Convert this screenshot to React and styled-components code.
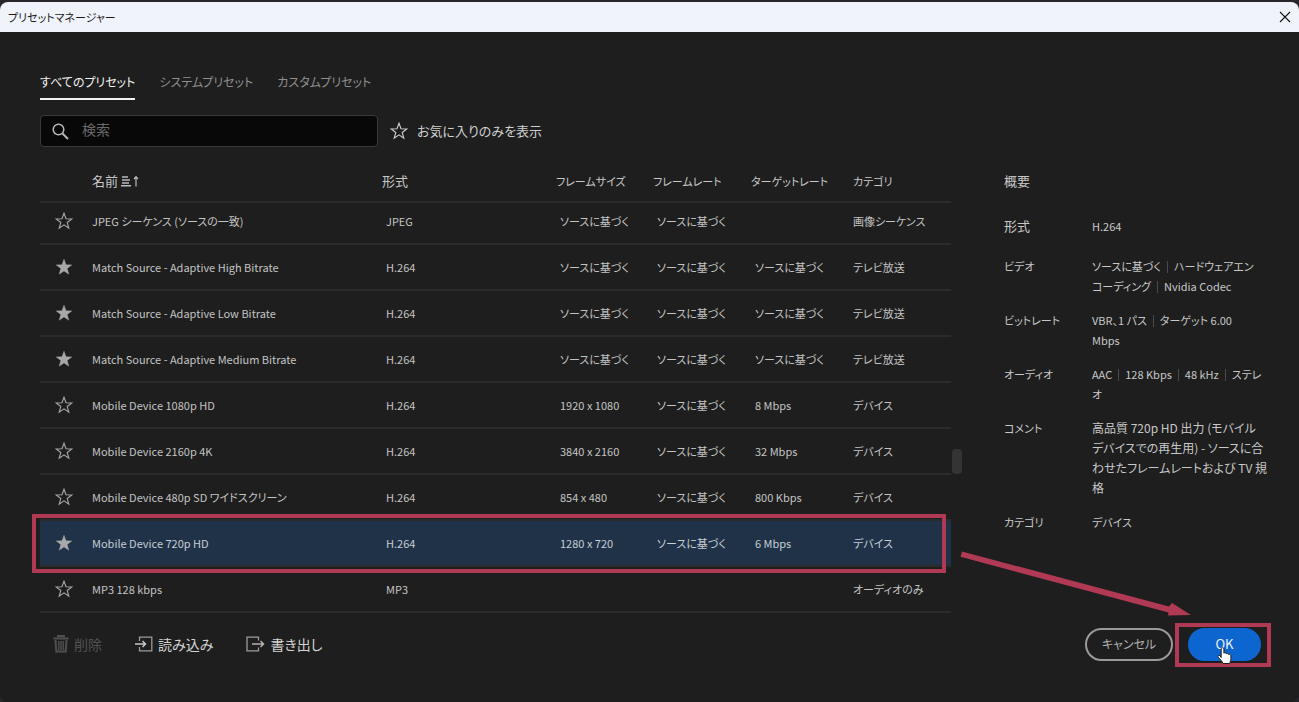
import React, { useState } from 'react'
import styled, { createGlobalStyle } from 'styled-components'

const GlobalStyle = createGlobalStyle`
  *, *::before, *::after {
    box-sizing: border-box;
  }

  body {
    margin: 0;
    background: #1e1e1e;
    font-family: 'Noto Sans CJK JP', 'Noto Sans', sans-serif;
    font-feature-settings: 'palt';
    font-size: 12px;
    line-height: 20px;
    color: #c8c8c8;
  }

  button, input {
    font: inherit;
    font-feature-settings: inherit;
    color: inherit;
  }
`

const Page = styled.div`
  min-height: 100vh;
  display: flex;
  flex-direction: column;
  padding-top: 2px;
  background: #26262b;
`

const Dialog = styled.main`
  position: relative;
  flex: 1;
  display: flex;
  flex-direction: column;
  background: #1e1e1e;
  border-radius: 8px;
  overflow: hidden;
`

const TitleBar = styled.header`
  display: flex;
  align-items: center;
  justify-content: space-between;
  height: 30px;
  padding: 0 8px;
  background: #f0f4fa;
  color: #1a1a1a;
`

const Title = styled.h1`
  margin: 0;
  font-size: 11px;
  font-weight: 400;
`

const CloseButton = styled.button`
  display: flex;
  padding: 0;
  border: 0;
  background: none;
`

const Content = styled.div`
  flex: 1;
  display: flex;
  flex-direction: column;
  padding: 36px 38px 40px 40px;
`

const Tabs = styled.nav`
  display: flex;
  gap: 24px;
`

const Tab = styled.button`
  height: 32px;
  padding: 0 0 2px;
  border: 0;
  border-bottom: 2px solid ${({ $active }) => ($active ? '#f2f2f2' : 'transparent')};
  background: none;
  color: ${({ $active }) => ($active ? '#f2f2f2' : '#8f8f8f')};
  white-space: nowrap;
`

const FilterBar = styled.div`
  display: flex;
  align-items: center;
  gap: 12px;
  margin-top: 15px;
`

const SearchBox = styled.label`
  display: flex;
  align-items: center;
  gap: 13px;
  width: 338px;
  height: 32px;
  padding: 0 11px;
  border: 1px solid #3a3a3a;
  border-radius: 4px;
  background: #080808;
`

const SearchInput = styled.input`
  flex: 1;
  min-width: 0;
  padding: 0 0 4px;
  border: 0;
  outline: 0;
  background: none;
  font-size: 14px;

  &::placeholder {
    color: #6a6a6a;
    opacity: 1;
  }
`

const IconButton = styled.button`
  display: flex;
  align-items: center;
  gap: 9px;
  padding: 0;
  border: 0;
  background: none;
  font-size: 13px;
  color: #d0d0d0;
`

const Columns = styled.div`
  display: flex;
  gap: 40px;
  margin-top: 14px;
`

const List = styled.section`
  position: relative;
  flex: 1;
  display: flex;
`

const Table = styled.table`
  flex: 1;
  table-layout: fixed;
  width: 100%;
  border-collapse: separate;
  border-spacing: 0;
  font-size: 11px;
`

const Th = styled.th`
  width: ${({ $width }) => ($width ? `${$width}px` : 'auto')};
  height: 42px;
  padding: 0;
  border-bottom: 2px solid #2b2b2b;
  font-size: ${({ $large }) => ($large ? '13px' : '11px')};
  font-weight: 400;
  text-align: left;
  white-space: nowrap;
`

const Sort = styled.span`
  display: inline-flex;
  align-items: center;
  gap: 3px;
`

const Row = styled.tr`
  background: ${({ $selected }) => ($selected ? '#1f3247' : 'transparent')};
  color: ${({ $selected }) => ($selected ? '#c6ced6' : '#c4c4c4')};
`

const Td = styled.td`
  height: ${({ $first }) => ($first ? '42px' : '46px')};
  padding: ${({ $first }) => ($first ? '0 0 4px' : '0')};
  padding-left: ${({ $inset }) => ($inset ? '4px' : '0')};
  border-bottom: 2px solid #2b2b2b;
  white-space: nowrap;
`

const StarButton = styled.button`
  display: flex;
  margin-left: 15px;
  padding: 0;
  border: 0;
  background: none;
  color: #a8a8a8;
`

const Scrollbar = styled.div`
  width: 13px;
  height: 100%;
  padding: 288px 2px 0 1px;
`

const Thumb = styled.div`
  height: 25px;
  border-radius: 4px;
  background: #343434;
`

const RowFrame = styled.div`
  position: absolute;
  left: -8px;
  right: 18px;
  bottom: 40px;
  height: 59px;
  border: 4px solid #b03a53;
  pointer-events: none;
`

const Summary = styled.aside`
  width: 257px;
  padding-top: 10px;
`

const SummaryTitle = styled.h2`
  margin: 0 0 25px;
  font-size: 13px;
  font-weight: 400;
`

const Details = styled.dl`
  display: grid;
  grid-template-columns: 88px 1fr;
  row-gap: 14px;
  margin: 0;
`

const Term = styled.dt`
  padding-bottom: ${({ $first }) => ($first ? '6px' : '0')};
  font-size: ${({ $first }) => ($first ? '13px' : '11px')};
`

const Value = styled.dd`
  margin: 0;
  font-size: ${({ $prose }) => ($prose ? '12px' : '11px')};
`

const Line = styled.span`
  display: block;
  white-space: nowrap;
`

const Divider = styled.span`
  display: inline-block;
  width: 1px;
  height: 12px;
  margin: 0 6px;
  background: #4a4a4a;
  vertical-align: -2px;
`

const Footer = styled.footer`
  display: flex;
  align-items: center;
  justify-content: space-between;
  margin-top: 15px;
`

const Actions = styled.div`
  display: flex;
  gap: ${({ $gap }) => $gap}px;
  padding-left: ${({ $inset }) => ($inset ? '13px' : '0')};
`

const Action = styled.button`
  display: flex;
  align-items: center;
  gap: 5px;
  padding: 0 0 2px;
  border: 0;
  background: none;
  font-size: 14px;
  color: #d4d4d4;
  white-space: nowrap;

  &:disabled {
    color: #505050;
  }
`

const PillButton = styled.button`
  width: ${({ $primary }) => ($primary ? '73px' : '88px')};
  height: 33px;
  padding: 0 0 2px;
  border: 2px solid ${({ $primary }) => ($primary ? '#0d66d0' : '#9a9a9a')};
  border-radius: 17px;
  background: ${({ $primary }) => ($primary ? '#0d66d0' : 'transparent')};
  color: ${({ $primary }) => ($primary ? '#f4f4f4' : '#b0b0b0')};
  font-size: ${({ $primary }) => ($primary ? '13px' : '12px')};
  white-space: nowrap;
`

const Highlighted = styled.div`
  position: relative;

  &::after {
    content: '';
    position: absolute;
    inset: -5px -10px -6px -13px;
    border: 4px solid #b03a53;
    pointer-events: none;
  }
`

const Pointer = styled.svg`
  position: absolute;
  z-index: 1;
  left: 28px;
  top: 19px;
  pointer-events: none;
`

const Arrow = styled.svg`
  position: absolute;
  right: 107px;
  top: 546px;
  pointer-events: none;
`

const basis = 'ソースに基づく'

const presets = [
  { name: 'JPEG シーケンス (ソースの一致)', format: 'JPEG', size: basis, rate: basis, target: '', category: '画像シーケンス' },
  { name: 'Match Source - Adaptive High Bitrate', format: 'H.264', size: basis, rate: basis, target: basis, category: 'テレビ放送', starred: true },
  { name: 'Match Source - Adaptive Low Bitrate', format: 'H.264', size: basis, rate: basis, target: basis, category: 'テレビ放送', starred: true },
  { name: 'Match Source - Adaptive Medium Bitrate', format: 'H.264', size: basis, rate: basis, target: basis, category: 'テレビ放送', starred: true },
  { name: 'Mobile Device 1080p HD', format: 'H.264', size: '1920 x 1080', rate: basis, target: '8 Mbps', category: 'デバイス' },
  { name: 'Mobile Device 2160p 4K', format: 'H.264', size: '3840 x 2160', rate: basis, target: '32 Mbps', category: 'デバイス' },
  { name: 'Mobile Device 480p SD ワイドスクリーン', format: 'H.264', size: '854 x 480', rate: basis, target: '800 Kbps', category: 'デバイス' },
  { name: 'Mobile Device 720p HD', format: 'H.264', size: '1280 x 720', rate: basis, target: '6 Mbps', category: 'デバイス', starred: true },
  { name: 'MP3 128 kbps', format: 'MP3', size: '', rate: '', target: '', category: 'オーディオのみ' },
]

// each inner array is one line, its parts separated by a thin divider
const details = [
  { term: '形式', lines: [['H.264']] },
  { term: 'ビデオ', lines: [[basis, 'ハードウェアエン'], ['コーディング', 'Nvidia Codec']] },
  { term: 'ビットレート', lines: [['VBR、1 パス', 'ターゲット 6.00'], ['Mbps']] },
  { term: 'オーディオ', lines: [['AAC', '128 Kbps', '48 kHz', 'ステレ'], ['オ']] },
  { term: 'コメント', prose: true, lines: [['高品質 720p HD 出力 (モバイル'], ['デバイスでの再生用) - ソースに合'], ['わせたフレームレートおよび TV 規'], ['格']] },
  { term: 'カテゴリ', lines: [['デバイス']] },
]

const tabs = ['すべてのプリセット', 'システムプリセット', 'カスタムプリセット']

const Star = ({ filled }) => (
  <svg width="18" height="18" viewBox="0 0 18 18" fill={filled ? 'currentColor' : 'none'} stroke="currentColor" strokeWidth={filled ? 0.4 : 1.1}>
    <path d="M9 1.2 11 6.7l5.8.2-4.6 3.6 1.6 5.7L9 12.9l-4.8 3.3 1.6-5.7L1.2 6.9 7 6.7z" />
  </svg>
)

const SortIcon = () => (
  <svg width="19" height="12" viewBox="0 0 19 12" fill="none" stroke="#bababa" strokeWidth="1.4">
    <path d="M1 2h6M1 5h8M1 8h7M0 10.8h10" />
    <path d="M15 11.5V2M13 4l2-2.3L17 4" strokeWidth="1.2" />
  </svg>
)

const TrashIcon = () => (
  <svg width="16" height="18" viewBox="0 0 16 18" fill="none" stroke="currentColor">
    <path d="M.5 3.5h15" strokeWidth="2.2" />
    <path d="M5 2.5V1h6v1.5" strokeWidth="1.8" />
    <path d="M2.5 5l.8 11.5h9.4L13.5 5" strokeWidth="2" />
    <path d="M5.8 6v9M8 6v9M10.2 6v9" strokeWidth="1.4" />
  </svg>
)

const ImportIcon = () => (
  <svg width="18" height="16" viewBox="0 0 18 16" fill="none" stroke="#9c9c9c" strokeWidth="1.3">
    <path d="M4.5 5V1.2h12.3v13.6H4.5V11" />
    <path d="M0 8h10M7.5 5l3 3-3 3" stroke="#c8c8c8" strokeWidth="1.5" />
  </svg>
)

const ExportIcon = () => (
  <svg width="19" height="16" viewBox="0 0 19 16" fill="none" stroke="#9c9c9c" strokeWidth="1.3">
    <path d="M12.5 4.5V1.2H1v13.6h11.5v-3.3" />
    <path d="M6 8h11M14.5 5l3 3-3 3" stroke="#b4b4b4" strokeWidth="1.5" />
  </svg>
)

const App = () => {
  const [activeTab, setActiveTab] = useState(0)
  const [selected, setSelected] = useState(7)

  return (
    <>
      <GlobalStyle />
      <Page>
        <Dialog>
          <TitleBar>
            <Title>プリセットマネージャー</Title>
            <CloseButton aria-label="閉じる">
              <svg width="12" height="12" viewBox="0 0 12 12" stroke="#111" strokeWidth="1.1">
                <path d="M1 1l10 10M11 1 1 11" />
              </svg>
            </CloseButton>
          </TitleBar>

          <Content>
            <Tabs>
              {tabs.map((tab, i) => (
                <Tab key={tab} $active={i === activeTab} onClick={() => setActiveTab(i)}>
                  {tab}
                </Tab>
              ))}
            </Tabs>

            <FilterBar>
              <SearchBox>
                <svg width="17" height="17" viewBox="0 0 17 17" fill="none" stroke="#b8b8b8">
                  <circle cx="6.5" cy="6.5" r="5.3" strokeWidth="1.5" />
                  <path d="M10.5 10.5l5.5 5.5" strokeWidth="2" />
                </svg>
                <SearchInput type="search" placeholder="検索" aria-label="検索" />
              </SearchBox>
              <IconButton>
                <Star />
                お気に入りのみを表示
              </IconButton>
            </FilterBar>

            <Columns>
              <List>
                <Table>
                  <thead>
                    <tr>
                      <Th $width={52} aria-label="お気に入り" />
                      <Th $large>
                        <Sort>
                          名前
                          <SortIcon />
                        </Sort>
                      </Th>
                      <Th $width={174} $large>形式</Th>
                      <Th $width={97}>フレームサイズ</Th>
                      <Th $width={98}>フレームレート</Th>
                      <Th $width={102}>ターゲットレート</Th>
                      <Th $width={98}>カテゴリ</Th>
                    </tr>
                  </thead>
                  <tbody>
                    {presets.map((preset, i) => (
                      <Row key={preset.name} $selected={i === selected} onClick={() => setSelected(i)}>
                        <Td $first={i === 0}>
                          <StarButton aria-label="お気に入り">
                            <Star filled={preset.starred} />
                          </StarButton>
                        </Td>
                        <Td $first={i === 0}>{preset.name}</Td>
                        <Td $first={i === 0} $inset>{preset.format}</Td>
                        <Td $first={i === 0} $inset>{preset.size}</Td>
                        <Td $first={i === 0} $inset>{preset.rate}</Td>
                        <Td $first={i === 0} $inset>{preset.target}</Td>
                        <Td $first={i === 0}>{preset.category}</Td>
                      </Row>
                    ))}
                  </tbody>
                </Table>
                <Scrollbar>
                  <Thumb />
                </Scrollbar>
                <RowFrame />
              </List>

              <Summary>
                <SummaryTitle>概要</SummaryTitle>
                <Details>
                  {details.map(({ term, lines, prose }, i) => (
                    <React.Fragment key={term}>
                      <Term $first={i === 0}>{term}</Term>
                      <Value $prose={prose}>
                        {lines.map((parts) => (
                          <Line key={parts[0]}>
                            {parts.map((part, n) => (
                              <React.Fragment key={part}>
                                {n > 0 && <Divider />}
                                {part}
                              </React.Fragment>
                            ))}
                          </Line>
                        ))}
                      </Value>
                    </React.Fragment>
                  ))}
                </Details>
              </Summary>
            </Columns>

            <Footer>
              <Actions $gap={33} $inset>
                <Action disabled>
                  <TrashIcon />
                  削除
                </Action>
                <Action>
                  <ImportIcon />
                  読み込み
                </Action>
                <Action>
                  <ExportIcon />
                  書き出し
                </Action>
              </Actions>
              <Actions $gap={15}>
                <PillButton>キャンセル</PillButton>
                <Highlighted>
                  <PillButton $primary>OK</PillButton>
                  <Pointer width="17" height="18" viewBox="0 0 17 18" fill="#fff" stroke="#222" strokeWidth="1">
                    <path d="M5.2 10.5V2.2c0-2 2.7-2 2.7 0v4c.5-.8 2.3-.6 2.5.5.7-.6 2.2-.3 2.3.8.9-.4 2.2 0 2.2 1.3v3.4c0 1.5-1 2.3-1 4.300H7c-.5-2-3-4.200-4.800-6.300-1-1.400.7-2.600 1.800-1.400z" />
                  </Pointer>
                </Highlighted>
              </Actions>
            </Footer>
          </Content>

          <Arrow width="232" height="72" viewBox="0 0 232 72" fill="#b03a53">
            <path d="M2 3.500 209 58.600 212 55 231 67 208 67.500 208.500 64.500 .5 8.800z" />
          </Arrow>
        </Dialog>
      </Page>
    </>
  )
}

export default App
